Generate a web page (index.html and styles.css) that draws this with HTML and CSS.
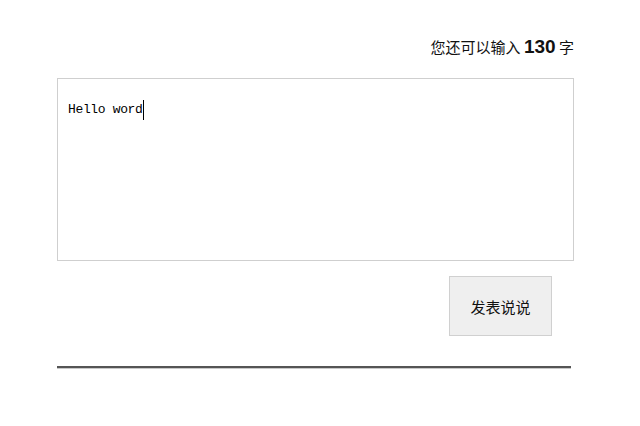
FILE: index.html
```html
<!DOCTYPE html>
<html>
<head>
<meta charset="utf-8">
<link rel="stylesheet" href="styles.css">
</head>
<body>
<div class="wrap">
  <div class="tip">您还可以输入 <span class="num">130</span> 字</div>
  <div class="box"><span class="txt">Hello word</span><span class="caret"></span></div>
  <div class="actions"><button class="btn">发表说说</button></div>
  <div class="rule"></div>
</div>
</body>
</html>
```
FILE: styles.css
```css
html, body {
  margin: 0;
  padding: 0;
  background: #fff;
}
.wrap {
  margin-left: 57px;
  width: 517px;
  padding-top: 34px;
  font-family: "Noto Sans CJK SC", "Liberation Sans", sans-serif;
  color: #111;
}
.tip {
  text-align: right;
  font-size: 15px;
  line-height: 26px;
  height: 26px;
  margin-bottom: 18px;
}
.num {
  font-family: "Liberation Sans", sans-serif;
  font-weight: bold;
  font-size: 19px;
}
.box {
  box-sizing: border-box;
  height: 183px;
  border: 1px solid #cfcfcf;
  padding: 21px 10px;
  display: flex;
  align-items: flex-start;
}
.txt {
  font-family: "Liberation Mono", monospace;
  font-size: 13px;
  letter-spacing: -0.35px;
  line-height: 20px;
  color: #000;
}
.caret {
  display: inline-block;
  width: 1px;
  height: 20px;
  background: #000;
}
.actions {
  display: flex;
  justify-content: flex-end;
  padding-right: 22px;
  margin-top: 15px;
}
.btn {
  box-sizing: border-box;
  width: 103px;
  height: 60px;
  background: #efefef;
  border: 1px solid #d0d0d0;
  font-family: "Noto Sans CJK SC", sans-serif;
  font-size: 15px;
  color: #111;
  padding: 0;
}
.rule {
  margin-top: 30px;
  width: 514px;
  border-top: 2px solid #555;
  border-bottom: 1px solid #c8c8c8;
}
```
